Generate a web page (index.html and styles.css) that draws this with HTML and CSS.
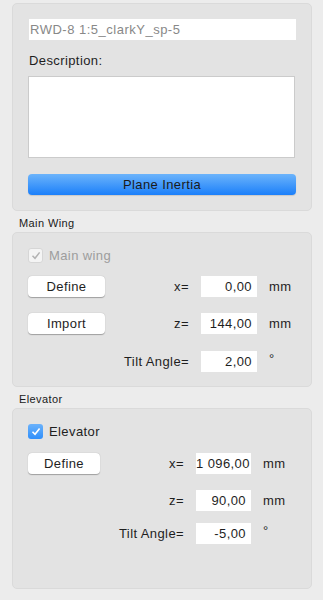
FILE: index.html
```html
<!DOCTYPE html>
<html>
<head>
<meta charset="utf-8">
<link rel="stylesheet" href="styles.css">
<title>Plane</title>
</head>
<body>
	<div class="group group-desc">
		<div class="namefield">RWD-8 1:5_clarkY_sp-5</div>
		<div class="desclabel">Description:</div>
		<div class="textarea"></div>
		<button type="button" class="bluebtn">Plane Inertia</button>
	</div>

	<div class="grouptitle">Main Wing</div>
	<div class="group group-wing">
		<label class="check disabled">
			<span class="box"><svg width="10" height="9" viewBox="0 0 10 9"><path d="M1.5 4.8 L4 7.3 L8.6 1.4" fill="none" stroke="#b2b2b2" stroke-width="1.5"/></svg></span>
			Main wing
		</label>
		<div class="row row-first">
			<button type="button" class="btn">Define</button>
			<span class="lbl">x=</span>
			<span class="num">0,00</span>
			<span class="unit">mm</span>
		</div>
		<div class="row">
			<button type="button" class="btn">Import</button>
			<span class="lbl">z=</span>
			<span class="num">144,00</span>
			<span class="unit">mm</span>
		</div>
		<div class="row row-last">
			<span class="spacer"></span>
			<span class="lbl">Tilt Angle=</span>
			<span class="num">2,00</span>
			<span class="unit deg">°</span>
		</div>
	</div>

	<div class="grouptitle">Elevator</div>
	<div class="group group-elev">
		<label class="check">
			<span class="box on"><svg width="10" height="9" viewBox="0 0 10 9"><path d="M1.5 4.8 L4 7.3 L8.6 1.4" fill="none" stroke="#ffffff" stroke-width="1.6"/></svg></span>
			Elevator
		</label>
		<div class="row row-first">
			<button type="button" class="btn">Define</button>
			<span class="lbl">x=</span>
			<span class="num">1 096,00</span>
			<span class="unit">mm</span>
		</div>
		<div class="row row-z">
			<span class="spacer"></span>
			<span class="lbl">z=</span>
			<span class="num">90,00</span>
			<span class="unit">mm</span>
		</div>
		<div class="row row-tilt">
			<span class="spacer"></span>
			<span class="lbl">Tilt Angle=</span>
			<span class="num">-5,00</span>
			<span class="unit deg">°</span>
		</div>
	</div>
</body>
</html>
```

FILE: styles.css
```css
body {
	margin: 0;
	background-color: #ececec;
	font-family: "Liberation Sans", Arial, sans-serif;
	font-size: 13px;
	letter-spacing: 0.4px;
	color: #1e1e1e;
}

div.group {
	width: 300px;
	margin-left: 12px;
	border: 1px solid #dadada;
	border-radius: 5px;
	background-color: #e3e3e3;
	box-sizing: border-box;
}

div.group-desc {
	margin-top: 3px;
	height: 208px;
	padding: 15px 15px 0 16px;
}

div.namefield {
	height: 21px;
	line-height: 21px;
	background-color: #ffffff;
	padding-left: 1px;
	color: #888888;
	font-size: 13px;
	letter-spacing: 0.5px;
	width: 266px;
}

div.desclabel {
	margin-top: 13px;
	line-height: 16px;
}

div.textarea {
	margin-top: 7px;
	margin-left: -1px;
	width: 267px;
	height: 82px;
	box-sizing: border-box;
	background-color: #ffffff;
	border: 1px solid #cbcbcb;
}

button.bluebtn {
	display: block;
	margin-top: 16px;
	width: 268px;
	margin-left: -1px;
	height: 21px;
	border: 0;
	border-radius: 4px;
	background: linear-gradient(#6cb4fb, #1b7ffa);
	box-shadow: 0 1px 1px rgba(0,0,0,0.12);
	font-family: inherit;
	font-size: 13px;
	letter-spacing: 0.4px;
	color: #1a1a1a;
	padding: 0;
}

div.grouptitle {
	margin-left: 19px;
	font-size: 11px;
	letter-spacing: 0.4px;
	height: 21px;
	line-height: 13px;
	padding-top: 6px;
	box-sizing: border-box;
	color: #1a1a1a;
}

div.group-wing {
	height: 155px;
	padding: 15px 0 0 15px;
}

div.group-elev {
	height: 181px;
	padding: 15px 0 0 15px;
}

label.check {
	display: flex;
	align-items: center;
	height: 15px;
	gap: 6px;
}

label.check.disabled {
	color: #9d9d9d;
}

span.box {
	display: flex;
	align-items: center;
	justify-content: center;
	width: 15px;
	height: 15px;
	box-sizing: border-box;
	border-radius: 3px;
	border: 1px solid #d6d6d6;
	background-color: #f4f4f4;
}

span.box.on {
	border: 0;
	background: linear-gradient(#6bb2fb, #2f8ffb);
}

div.row {
	display: grid;
	grid-template-columns: 77px 72px 56px auto;
	column-gap: 12px;
	align-items: center;
	height: 21px;
	margin-top: 16px;
}

div.group-wing div.row-first {
	margin-top: 13px;
}

div.group-wing div.row-last {
	margin-top: 17px;
}

div.group-elev div.row {
	grid-template-columns: 72px 72px 55px auto;
}

div.group-elev div.row-first {
	margin-top: 14px;
}

div.group-elev div.row-tilt {
	margin-top: 12px;
}

button.btn {
	height: 21px;
	border: 0;
	border-radius: 4px;
	background-color: #ffffff;
	box-shadow: 0 0.5px 1px rgba(0,0,0,0.3);
	font-family: inherit;
	font-size: 13px;
	letter-spacing: 0.4px;
	color: #1e1e1e;
	padding: 0;
}

span.lbl {
	text-align: right;
	white-space: nowrap;
}

span.num {
	height: 21px;
	line-height: 21px;
	background-color: #ffffff;
	text-align: right;
	padding-right: 5px;
	box-sizing: border-box;
	white-space: nowrap;
}

span.unit.deg {
	align-self: start;
	line-height: 16px;
}
```
